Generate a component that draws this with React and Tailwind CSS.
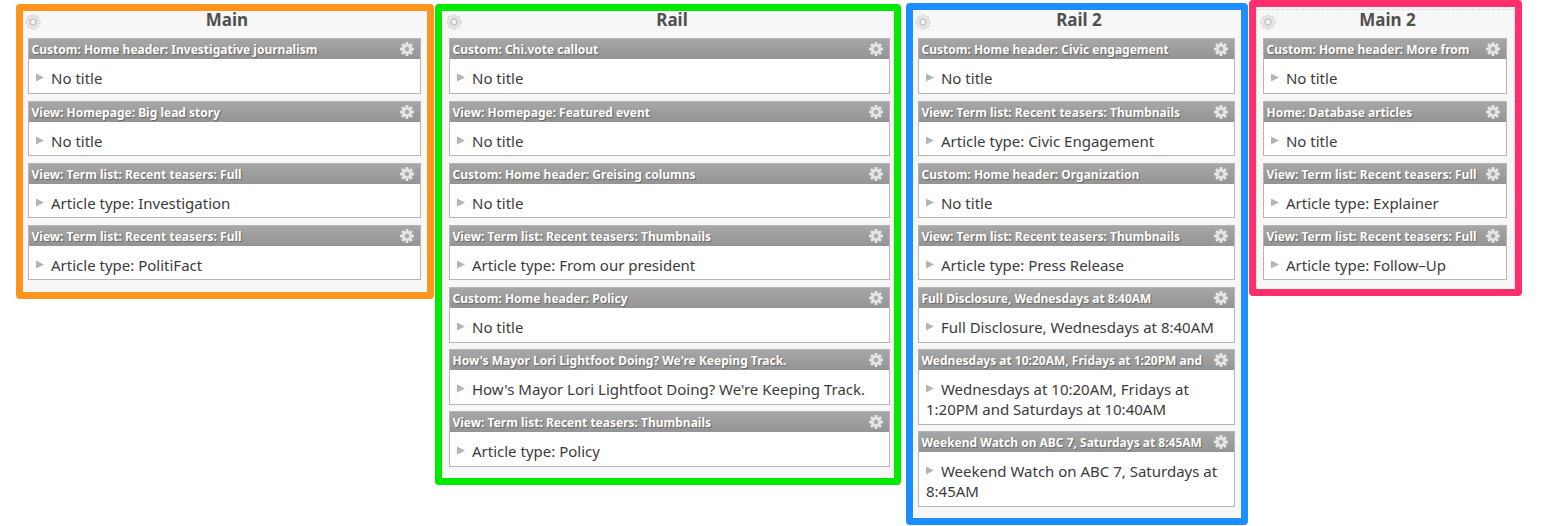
const TEETH = [0, 45, 90, 135, 180, 225, 270, 315];

function PaneGear() {
  return (
    <svg className="h-[14px] w-[14px] shrink-0" viewBox="-7 -7 14 14">
      <g fill="#e6e6e6">
        {TEETH.map((a) => (
          <rect key={a} x="-1.4" y="-7" width="2.8" height="4" rx="0.6" transform={`rotate(${a})`} />
        ))}
      </g>
      <circle r="3.7" fill="#c4c4c4" stroke="#e6e6e6" strokeWidth="2.6" />
      <circle r="1.9" fill="#a6a6a6" />
    </svg>
  );
}

function RegionGear() {
  return (
    <svg className="h-4 w-4" viewBox="-8 -8 16 16">
      <g fill="#e9e9e9" stroke="#d3d3d3" strokeWidth="0.8">
        {TEETH.map((a) => (
          <circle key={a} cy="-5.6" r="1.9" transform={`rotate(${a})`} />
        ))}
      </g>
      <circle r="5.4" fill="#e6e6e6" />
      <circle r="3" fill="#f4f4f4" stroke="#c6c6c6" strokeWidth="1.6" />
    </svg>
  );
}

function Pane({ head, title }) {
  return (
    <div className="border border-[#b5b5b5] bg-white pb-[4.65px]">
      <div className="flex h-5 items-center justify-between bg-linear-to-b from-[#a7a7a7] to-[#949494] pr-[6px] pl-[2.5px]">
        <span className="pt-[2px] text-[12px] leading-5 font-bold whitespace-nowrap text-white [text-shadow:1px_1px_1px_#666]">
          {head}
        </span>
        <PaneGear />
      </div>
      <div className="px-[7px] pt-[9px] text-[15px] leading-5 text-[#3b3b3b]">
        <svg className="mr-[7px] inline-block h-[9px] w-[8px] align-[2px]" viewBox="0 0 8 9">
          <path d="M0 0.5L8 4.5L0 8.5Z" fill="#b4b4b4" />
        </svg>
        {title}
      </div>
    </div>
  );
}

function Region({ name, frame, panes, inner }) {
  return (
    <section className={`shrink-0 rounded-[4px] border-[7px] bg-[#f7f7f7] ${frame}`}>
      <div className={inner}>
        <header className="relative h-[27.4px] text-center">
          <span className="absolute top-[3px] -left-[3px]">
            <RegionGear />
          </span>
          <h2 className="pl-[5px] text-[17px] leading-[18px] font-bold text-[#505050]">{name}</h2>
        </header>
        <div className="flex flex-col gap-[6.5px]">
          {panes.map(([head, title], i) => (
            <Pane key={i} head={head} title={title} />
          ))}
        </div>
      </div>
    </section>
  );
}

const REGIONS = [
  {
    name: "Main",
    frame: "ml-4 mt-1 w-[417.7px] h-[294.7px] border-[#ff951c]",
    inner: "pl-[5px] pr-[5.7px]",
    panes: [
      ["Custom: Home header: Investigative journalism", "No title"],
      ["View: Homepage: Big lead story", "No title"],
      ["View: Term list: Recent teasers: Full", "Article type: Investigation"],
      ["View: Term list: Recent teasers: Full", "Article type: PolitiFact"],
    ],
  },
  {
    name: "Rail",
    frame: "ml-[1.3px] mt-1 w-[465.7px] h-[480.7px] border-[#00ea00]",
    inner: "pl-[7px] pr-[3.7px]",
    panes: [
      ["Custom: Chi.vote callout", "No title"],
      ["View: Homepage: Featured event", "No title"],
      ["Custom: Home header: Greising columns", "No title"],
      ["View: Term list: Recent teasers: Thumbnails", "Article type: From our president"],
      ["Custom: Home header: Policy", "No title"],
      ["How's Mayor Lori Lightfoot Doing? We're Keeping Track.", "How's Mayor Lori Lightfoot Doing? We're Keeping Track."],
      ["View: Term list: Recent teasers: Thumbnails", "Article type: Policy"],
    ],
  },
  {
    name: "Rail 2",
    frame: "ml-[5.3px] mt-[3px] w-[342.3px] h-[522px] border-[#1b8fff]",
    inner: "pt-px pl-[5px] pr-[6.3px]",
    panes: [
      ["Custom: Home header: Civic engagement", "No title"],
      ["View: Term list: Recent teasers: Thumbnails", "Article type: Civic Engagement"],
      ["Custom: Home header: Organization", "No title"],
      ["View: Term list: Recent teasers: Thumbnails", "Article type: Press Release"],
      ["Full Disclosure, Wednesdays at 8:40AM", "Full Disclosure, Wednesdays at 8:40AM"],
      ["Wednesdays at 10:20AM, Fridays at 1:20PM and", "Wednesdays at 10:20AM, Fridays at 1:20PM and Saturdays at 10:40AM"],
      ["Weekend Watch on ABC 7, Saturdays at 8:45AM", "Weekend Watch on ABC 7, Saturdays at 8:45AM"],
    ],
  },
  {
    name: "Main 2",
    frame: "ml-[0.7px] w-[272.7px] h-[295.7px] border-[#ff2f6d]",
    inner: "mt-[2px] h-[279px] border border-b-0 border-dashed border-[#dcdcdc] pt-px pl-[6px] pr-[6.7px]",
    panes: [
      ["Custom: Home header: More from", "No title"],
      ["Home: Database articles", "No title"],
      ["View: Term list: Recent teasers: Full", "Article type: Explainer"],
      ["View: Term list: Recent teasers: Full", "Article type: Follow–Up"],
    ],
  },
];

export default function App() {
  return (
    <main className="flex h-[526px] w-[1565px] items-start overflow-hidden bg-white font-['Noto_Sans',sans-serif]">
      {REGIONS.map((r) => (
        <Region key={r.name} {...r} />
      ))}
    </main>
  );
}
